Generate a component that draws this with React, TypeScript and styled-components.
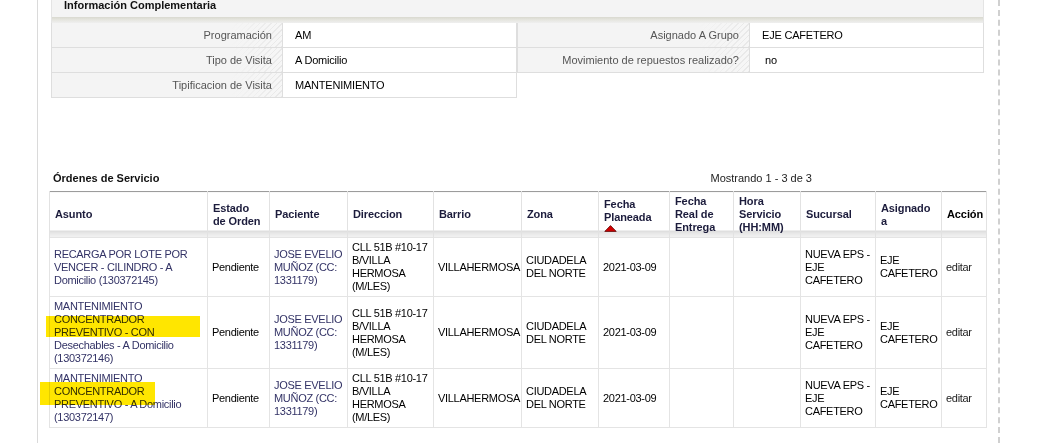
import { FC, Fragment } from "react";
import styled, { createGlobalStyle } from "styled-components";

const GlobalStyle = createGlobalStyle`
  html, body {
    margin: 0;
    padding: 0;
    background: #fff;
  }
  body {
    font-family: "Liberation Sans", Arial, sans-serif;
    font-size: 11px;
    color: #000;
    overflow: hidden;
  }
`;

const Page = styled.div`
  display: flex;
  height: 443px;
  overflow: hidden;
`;

const Gutter = styled.div`
  flex: none;
  width: 37px;
  border-right: 1px solid #dadada;
`;

const Main = styled.div`
  flex: none;
  width: 960px;
  border-right: 2px dashed #d0d0d0;
`;

/* ---------- informacion complementaria ---------- */

const InfoPanel = styled.section`
  width: 933px;
  margin: -7px 0 0 13px;
`;

const InfoHeader = styled.div`
  height: 30px;
  line-height: 24px;
  padding-left: 12px;
  font-weight: bold;
  color: #111;
  background: linear-gradient(
    to bottom,
    #f4f4f4 0,
    #f4f4f4 24px,
    #d9d9cf 24px,
    #e6e6e0 27px,
    #efefef 30px
  );
  border-left: 1px solid #e4e4e4;
  border-right: 1px solid #e4e4e4;
`;

const InfoGrid = styled.div`
  display: grid;
  grid-template-columns: 232px 234px 233px 234px;
`;

const InfoCell = styled.div<{ $label?: boolean; $edge?: boolean; $indent?: number }>`
  height: 24px;
  line-height: 24px;
  white-space: nowrap;
  overflow: hidden;
  letter-spacing: ${(p) => (p.$label ? "0" : "-0.2px")};
  border-right: 1px solid #dedede;
  border-bottom: 1px solid #dedede;
  border-left: ${(p) => (p.$edge ? "1px solid #dedede" : "none")};
  text-align: ${(p) => (p.$label ? "right" : "left")};
  padding: ${(p) => (p.$label ? "0 10px 0 0" : `0 0 0 ${p.$indent ?? 12}px`)};
  color: ${(p) => (p.$label ? "#555" : "#000")};
  background: ${(p) =>
    p.$label
      ? `linear-gradient(to right, #f4f4f4 0, #f4f4f4 78%, rgba(244,244,244,0.25) 100%),
         repeating-linear-gradient(-45deg, #e4e4e4 0 1px, #f7f7f7 1px 4px)`
      : "#fff"};
`;

/* ---------- ordenes de servicio ---------- */

const TitleBar = styled.div`
  display: flex;
  justify-content: space-between;
  box-sizing: border-box;
  width: 937px;
  margin: 72px 0 5px 11px;
  padding: 0 174px 0 4px;
  line-height: 16px;
`;

const Title = styled.span`
  font-weight: bold;
  color: #111;
`;

const Counter = styled.span`
  color: #222;
`;

const Orders = styled.table`
  width: 937px;
  margin-left: 11px;
  border-collapse: collapse;
  table-layout: fixed;
  border-top: 1px solid #9c9c9c;
  line-height: 13px;
  letter-spacing: -0.3px;
`;

const Col = styled.col<{ $w: number }>`
  width: ${(p) => p.$w}px;
`;

const Th = styled.th<{ $plain?: boolean }>`
  padding: 3px 4px 3px 5px;
  text-align: left;
  vertical-align: middle;
  white-space: nowrap;
  font-weight: bold;
  letter-spacing: -0.1px;
  color: ${(p) => (p.$plain ? "#000" : "#1c1c3c")};
  border-left: 1px solid #e2e2e2;
  border-right: 1px solid #e2e2e2;
  background: linear-gradient(
    to bottom,
    #fff 0,
    #fff calc(100% - 7px),
    #dadada calc(100% - 7px),
    #e9e9e9 calc(100% - 4px),
    #f3f3f3 100%
  );
  height: 39px;
`;

const Td = styled.td`
  position: relative;
  padding: 3px 3px 3px 4px;
  vertical-align: middle;
  white-space: nowrap;
  border: 1px solid #e4e4e4;
  color: #000;
`;

const Link = styled.a`
  color: #333366;
  text-decoration: none;
`;

const Action = styled.a`
  color: #222;
  text-decoration: none;
`;

const SortMark = styled.svg`
  display: block;
  margin: 1px 0 0 0;
`;

const Highlight = styled.span<{ $x: number; $y: number; $w: number; $h: number }>`
  position: absolute;
  left: ${(p) => p.$x}px;
  top: ${(p) => p.$y}px;
  width: ${(p) => p.$w}px;
  height: ${(p) => p.$h}px;
  background: #ffe600;
  mix-blend-mode: multiply;
  pointer-events: none;
`;

interface Mark {
  x: number;
  y: number;
  w: number;
  h: number;
}

interface Orden {
  asunto: string[];
  paciente: string[];
  direccion: string[];
  barrio: string;
  zona: string[];
  fecha: string;
  sucursal: string[];
  asignado: string[];
  mark?: Mark;
}

const paciente = ["JOSE EVELIO", "MUÑOZ (CC:", "1331179)"];
const direccion = ["CLL 51B #10-17", "B/VILLA", "HERMOSA", "(M/LES)"];

const ordenes: Orden[] = [
  {
    asunto: ["RECARGA POR LOTE POR", "VENCER - CILINDRO - A", "Domicilio (130372145)"],
    paciente,
    direccion,
    barrio: "VILLAHERMOSA",
    zona: ["CIUDADELA", "DEL NORTE"],
    fecha: "2021-03-09",
    sucursal: ["NUEVA EPS -", "EJE", "CAFETERO"],
    asignado: ["EJE", "CAFETERO"],
  },
  {
    asunto: [
      "MANTENIMIENTO",
      "CONCENTRADOR",
      "PREVENTIVO - CON",
      "Desechables - A Domicilio",
      "(130372146)",
    ],
    paciente,
    direccion,
    barrio: "VILLAHERMOSA",
    zona: ["CIUDADELA", "DEL NORTE"],
    fecha: "2021-03-09",
    sucursal: ["NUEVA EPS -", "EJE", "CAFETERO"],
    asignado: ["EJE", "CAFETERO"],
    mark: { x: -4, y: 19, w: 154, h: 21 },
  },
  {
    asunto: ["MANTENIMIENTO", "CONCENTRADOR", "PREVENTIVO - A Domicilio", "(130372147)"],
    paciente,
    direccion,
    barrio: "VILLAHERMOSA",
    zona: ["CIUDADELA", "DEL NORTE"],
    fecha: "2021-03-09",
    sucursal: ["NUEVA EPS -", "EJE", "CAFETERO"],
    asignado: ["EJE", "CAFETERO"],
    mark: { x: -10, y: 13, w: 115, h: 23 },
  },
];

const widths = [158, 62, 78, 86, 88, 77, 71, 64, 67, 75, 66, 45];

const Lines: FC<{ lines: string[] }> = ({ lines }) => (
  <>
    {lines.map((l, i) => (
      <Fragment key={i}>
        {i > 0 && <br />}
        {l}
      </Fragment>
    ))}
  </>
);

const InfoComplementaria: FC = () => (
  <InfoPanel>
    <InfoHeader>Información Complementaria</InfoHeader>
    <InfoGrid>
      <InfoCell $label $edge>Programación</InfoCell>
      <InfoCell>AM</InfoCell>
      <InfoCell $label $edge>Asignado A Grupo</InfoCell>
      <InfoCell>EJE CAFETERO</InfoCell>

      <InfoCell $label $edge>Tipo de Visita</InfoCell>
      <InfoCell>A Domicilio</InfoCell>
      <InfoCell $label $edge>Movimiento de repuestos realizado?</InfoCell>
      <InfoCell $indent={15}>no</InfoCell>

      <InfoCell $label $edge>Tipificacion de Visita</InfoCell>
      <InfoCell>MANTENIMIENTO</InfoCell>
    </InfoGrid>
  </InfoPanel>
);

const OrdenesServicio: FC = () => (
  <section>
    <TitleBar>
      <Title>Órdenes de Servicio</Title>
      <Counter>Mostrando 1 - 3 de 3</Counter>
    </TitleBar>
    <Orders>
      <colgroup>
        {widths.map((w, i) => (
          <Col key={i} $w={w} />
        ))}
      </colgroup>
      <thead>
        <tr>
          <Th>Asunto</Th>
          <Th>Estado<br />de Orden</Th>
          <Th>Paciente</Th>
          <Th>Direccion</Th>
          <Th>Barrio</Th>
          <Th>Zona</Th>
          <Th>
            Fecha<br />Planeada
            <SortMark width="13" height="7" viewBox="0 0 13 7">
              <path d="M6.5 0.6 L12.2 6.4 H0.8 Z" fill="#d30000" stroke="#5a0000" strokeWidth="0.8" />
            </SortMark>
          </Th>
          <Th>Fecha<br />Real de<br />Entrega</Th>
          <Th>Hora<br />Servicio<br />(HH:MM)</Th>
          <Th>Sucursal</Th>
          <Th>Asignado<br />a</Th>
          <Th $plain>Acción</Th>
        </tr>
      </thead>
      <tbody>
        {ordenes.map((o, i) => (
          <tr key={i}>
            <Td>
              <Link href="#">
                <Lines lines={o.asunto} />
              </Link>
              {o.mark && <Highlight $x={o.mark.x} $y={o.mark.y} $w={o.mark.w} $h={o.mark.h} />}
            </Td>
            <Td>Pendiente</Td>
            <Td>
              <Link href="#">
                <Lines lines={o.paciente} />
              </Link>
            </Td>
            <Td>
              <Lines lines={o.direccion} />
            </Td>
            <Td>{o.barrio}</Td>
            <Td>
              <Lines lines={o.zona} />
            </Td>
            <Td>{o.fecha}</Td>
            <Td />
            <Td />
            <Td>
              <Lines lines={o.sucursal} />
            </Td>
            <Td>
              <Lines lines={o.asignado} />
            </Td>
            <Td>
              <Action href="#">editar</Action>
            </Td>
          </tr>
        ))}
      </tbody>
    </Orders>
  </section>
);

export default function App() {
  return (
    <>
      <GlobalStyle />
      <Page>
        <Gutter />
        <Main>
          <InfoComplementaria />
          <OrdenesServicio />
        </Main>
      </Page>
    </>
  );
}
